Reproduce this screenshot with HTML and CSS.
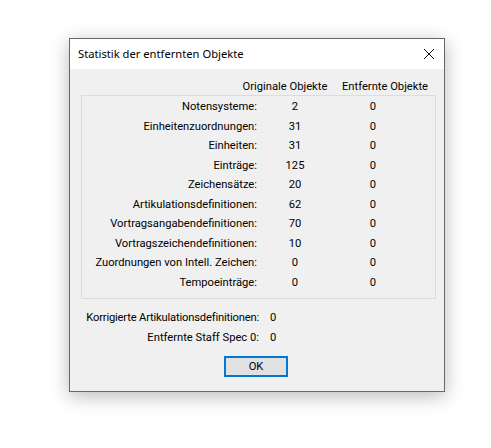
FILE: index.html
```html
<!DOCTYPE html>
<html lang="de">
<head>
<meta charset="utf-8">
<title>Statistik der entfernten Objekte</title>
<link rel="stylesheet" href="styles.css">
</head>
<body>
<div class="dialog">
  <div class="titlebar">
    <span class="title">Statistik der entfernten Objekte</span>
    <svg class="close" width="12" height="12" viewBox="0 0 12 12"><path d="M1 1 L11 11 M11 1 L1 11" stroke="#111" stroke-width="1" fill="none"/></svg>
  </div>
  <div class="content">
    <div class="head">
      <span>Originale Objekte</span>
      <span>Entfernte Objekte</span>
    </div>
    <div class="group">
      <div class="lbl">Notensysteme:</div><div class="v1">2</div><div class="v2">0</div>
      <div class="lbl">Einheitenzuordnungen:</div><div class="v1">31</div><div class="v2">0</div>
      <div class="lbl">Einheiten:</div><div class="v1">31</div><div class="v2">0</div>
      <div class="lbl">Einträge:</div><div class="v1">125</div><div class="v2">0</div>
      <div class="lbl">Zeichensätze:</div><div class="v1">20</div><div class="v2">0</div>
      <div class="lbl">Artikulationsdefinitionen:</div><div class="v1">62</div><div class="v2">0</div>
      <div class="lbl">Vortragsangabendefinitionen:</div><div class="v1">70</div><div class="v2">0</div>
      <div class="lbl">Vortragszeichendefinitionen:</div><div class="v1">10</div><div class="v2">0</div>
      <div class="lbl">Zuordnungen von Intell. Zeichen:</div><div class="v1">0</div><div class="v2">0</div>
      <div class="lbl">Tempoeinträge:</div><div class="v1">0</div><div class="v2">0</div>
    </div>
    <div class="extra">
      <div class="lbl tight">Korrigierte Artikulationsdefinitionen:</div><div>0</div>
      <div class="lbl">Entfernte Staff Spec 0:</div><div>0</div>
    </div>
    <div class="buttons">
      <button class="ok">OK</button>
    </div>
  </div>
</div>
</body>
</html>
```
FILE: styles.css
```css
html, body {
  margin: 0;
  padding: 0;
  background: #ffffff;
}
body {
  width: 491px;
  height: 448px;
  font-family: Roboto, "Noto Sans", "Liberation Sans", sans-serif;
  font-size: 11.2px;
  color: #000;
  overflow: hidden;
  white-space: nowrap;
}
.dialog {
  margin: 38px 0 0 69px;
  width: 374px;
  border: 1px solid #676767;
  background: #f0f0f0;
  box-shadow: 0 4px 18px rgba(0, 0, 0, 0.28);
  display: flex;
  flex-direction: column;
}
.titlebar {
  height: 30px;
  background: #ffffff;
  display: flex;
  align-items: center;
  justify-content: space-between;
  padding: 0 8px 0 8px;
}
.title {
  font-family: "Noto Sans", "Liberation Sans", sans-serif;
  font-size: 11.2px;
  line-height: 16px;
}
.close {
  margin-right: 1px;
}
.content {
  display: flex;
  flex-direction: column;
  padding: 10px 0 14px 0;
}
.head {
  display: grid;
  grid-template-columns: 100px 100px;
  padding-left: 165px;
  line-height: 16px;
  text-align: center;
}
.group {
  margin: 0 8px 0 11px;
  border: 1px solid #dcdcdc;
  padding: 1px 0 6px 0;
  display: grid;
  grid-template-columns: 175px 76px 80px;
  grid-auto-rows: 19.5px;
  line-height: 19.5px;
}
.group .lbl {
  text-align: right;
}
.group .v1, .group .v2 {
  text-align: center;
}
.extra {
  margin-top: 9px;
  display: grid;
  grid-template-columns: 189px auto;
  column-gap: 11px;
  grid-auto-rows: 20px;
  line-height: 20px;
}
.extra .lbl {
  text-align: right;
}
.extra .tight {
  letter-spacing: -0.18px;
}
.buttons {
  margin-top: 8px;
  display: flex;
  justify-content: center;
  padding-right: 2px;
}
.ok {
  width: 64px;
  height: 21px;
  border: 2px solid #0078d7;
  background: #e1e1e1;
  font-family: inherit;
  font-size: 11.2px;
  color: #000;
  padding: 0;
  margin: 0;
}
```
